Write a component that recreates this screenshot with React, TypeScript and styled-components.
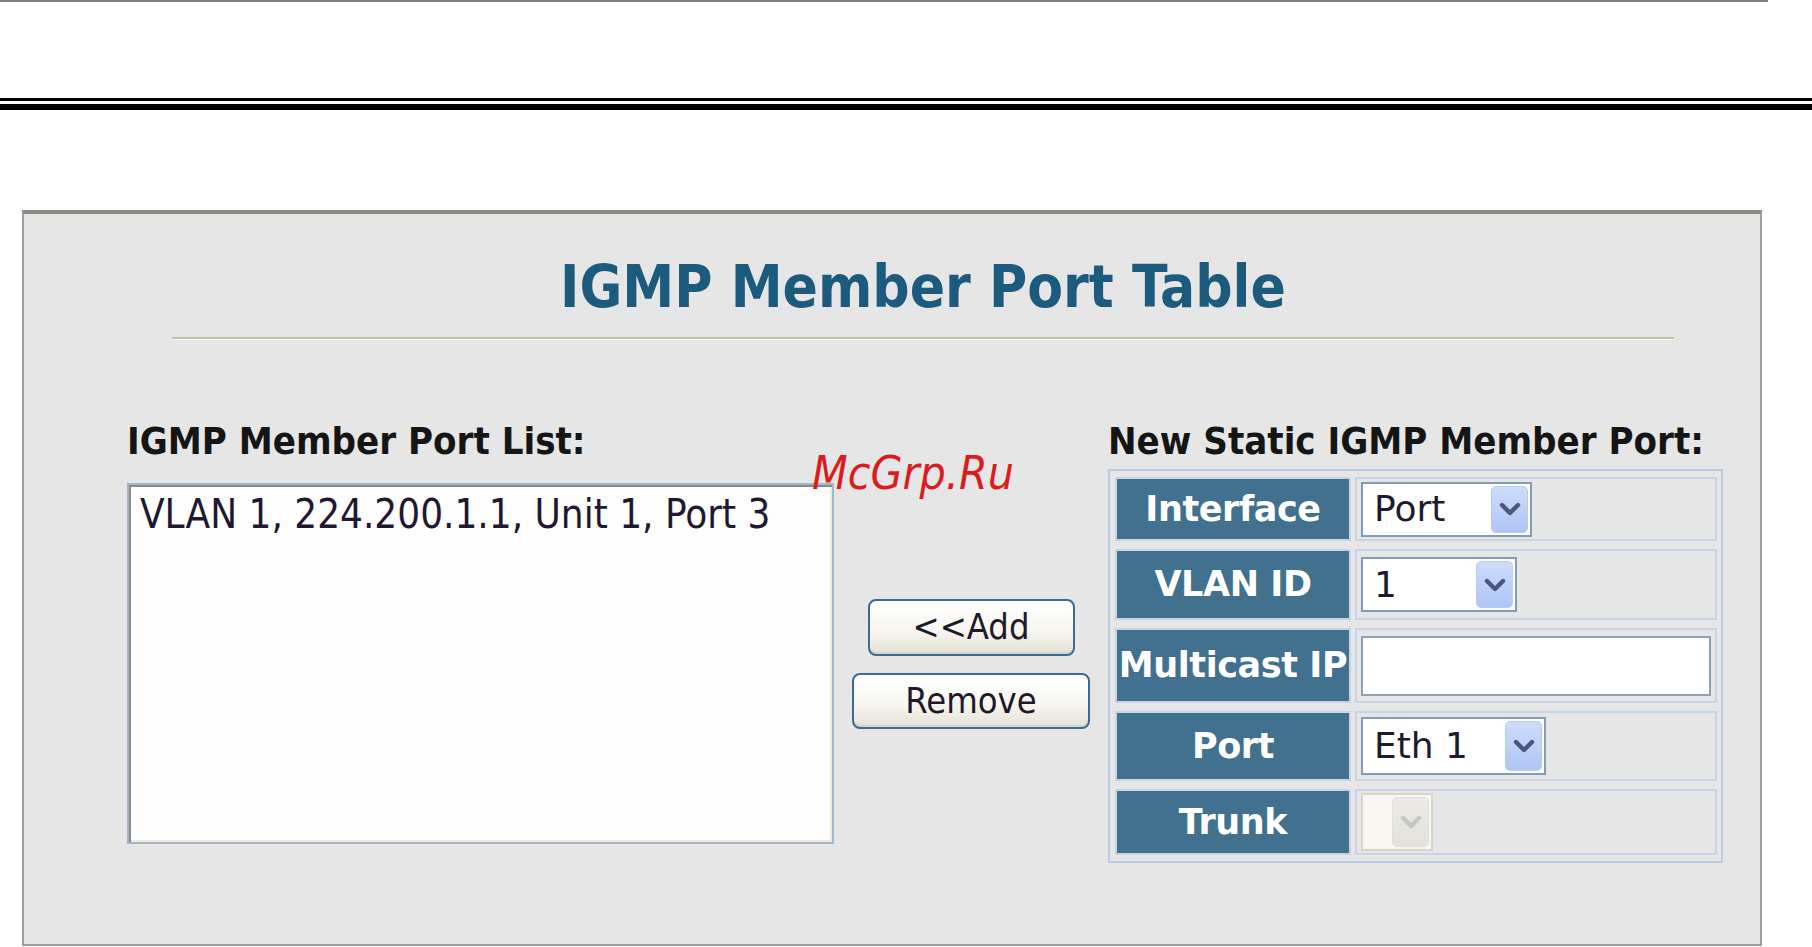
import React from "react";
import styled, { createGlobalStyle } from "styled-components";

const COND = `"DejaVu Sans Condensed", "DejaVu Sans", sans-serif`;
const WIDE = `"DejaVu Sans", "Liberation Sans", sans-serif`;

const GlobalStyle = createGlobalStyle`
  html, body { margin: 0; padding: 0; background: #ffffff; }
  body { font-family: ${WIDE}; }
  *, *::before, *::after { box-sizing: border-box; }
`;

const Page = styled.div`
  position: relative;
  width: 1812px;
  height: 947px;
  overflow: hidden;
  background: #ffffff;
`;

const TopRule = styled.div`
  height: 2px;
  margin-right: 44px;
  background: #808080;
`;

const DoubleRule = styled.div`
  margin-top: 96px;
  height: 12px;
  border-top: 3px solid #000000;
  border-bottom: 6px solid #000000;
`;

const Panel = styled.section`
  margin: 100px 0 0 22px;
  width: 1740px;
  height: 736px;
  background: #e6e6e6;
  border-top: 4px solid #8a8982;
  border-left: 2px solid #9c9c9c;
  border-right: 2px solid #9c9c9c;
  border-bottom: 2px solid #9c9c9c;
  padding-top: 44px;
`;

const TitleBlock = styled.header`
  margin-left: 148px;
  width: 1502px;
`;

const Title = styled.h1`
  margin: 0;
  font-family: ${COND};
  font-weight: bold;
  font-size: 58px;
  line-height: 58px;
  text-align: center;
  color: #1d5b7e;
  white-space: nowrap;
`;

const TitleRule = styled.div`
  margin-top: 21px;
  height: 3px;
  border-top: 2px solid #c3c1ab;
  border-bottom: 1px solid #f5f5ef;
`;

const Body = styled.div`
  margin-top: 82px;
  padding-left: 103px;
  display: flex;
  align-items: flex-start;
`;

const Column = styled.div<{ $w: number }>`
  width: ${(p) => p.$w}px;
  display: flex;
  flex-direction: column;
`;

const Heading = styled.h2`
  margin: 0;
  font-family: ${COND};
  font-weight: bold;
  font-size: 38px;
  line-height: 38px;
  color: #151515;
  white-space: nowrap;
`;

const ListBox = styled.div`
  margin-top: 23px;
  width: 707px;
  height: 361px;
  background: #fdfdfd;
  border: 2px solid #a3b6cd;
  box-shadow: inset 2px 2px 0 #8a8a8a, inset -2px -2px 0 #efeadc;
  padding: 9px 11px;
`;

const ListItem = styled.div`
  font-family: ${COND};
  font-size: 40px;
  line-height: 40px;
  color: #1f1830;
  white-space: nowrap;
`;

const ButtonColumn = styled.div`
  width: 274px;
  height: 361px;
  margin-top: 61px;
  display: flex;
  flex-direction: column;
  align-items: center;
  justify-content: center;
  gap: 17px;
`;

const Button = styled.button<{ $w: number; $h: number }>`
  width: ${(p) => p.$w}px;
  height: ${(p) => p.$h}px;
  margin: 0;
  padding: 0;
  border: 2px solid #3c6a96;
  border-radius: 8px;
  background: linear-gradient(#ffffff 0%, #f7f6f1 55%, #e4e1d6 100%);
  box-shadow: inset 0 -2px 0 #d6d2c4;
  font-family: ${COND};
  font-size: 36px;
  line-height: 36px;
  color: #1e1a28;
  cursor: pointer;
`;

const FormTable = styled.div`
  margin-top: 9px;
  width: 615px;
  border: 2px solid #b9cbe7;
  padding: 6px 4px 6px 5px;
  display: grid;
  grid-template-columns: 236px 362px;
  grid-template-rows: 64px 71px 75px 70px 66px;
  column-gap: 4px;
  row-gap: 8px;
`;

const LabelCell = styled.div`
  background: #41718f;
  border: 2px solid #c7d4e8;
  display: flex;
  align-items: center;
  justify-content: center;
  font-family: ${WIDE};
  font-weight: bold;
  font-size: 35px;
  line-height: 35px;
  color: #ffffff;
  white-space: nowrap;
  letter-spacing: -0.4px;
`;

const ValueCell = styled.div`
  border: 2px solid #c7d4e8;
  display: flex;
  align-items: center;
  padding-left: 4px;
`;

const Select = styled.div<{ $w: number; $h: number; $disabled?: boolean }>`
  width: ${(p) => p.$w}px;
  height: ${(p) => p.$h}px;
  border: 2px solid ${(p) => (p.$disabled ? "#d9d5c5" : "#7f9db9")};
  background: ${(p) => (p.$disabled ? "#f7f6f0" : "#ffffff")};
  display: flex;
  align-items: stretch;
  padding: 2px 2px 2px ${(p) => (p.$disabled ? 16 : 11)}px;
`;

const SelectValue = styled.span`
  flex: 1;
  display: flex;
  align-items: center;
  font-family: ${WIDE};
  font-size: 36px;
  line-height: 36px;
  color: #1e1a2c;
  white-space: nowrap;
`;

const ArrowButton = styled.span<{ $disabled?: boolean }>`
  width: 37px;
  display: flex;
  align-items: center;
  justify-content: center;
  border-radius: 5px;
  border: 1px solid ${(p) => (p.$disabled ? "#e0dfd8" : "#b7cbf2")};
  background: ${(p) =>
    p.$disabled
      ? "linear-gradient(#ebeae5, #e2e1db)"
      : "linear-gradient(#cddcfc, #afc5f5)"};
  color: ${(p) => (p.$disabled ? "#c6c6c2" : "#48587c")};
`;

const TextInput = styled.input`
  width: 350px;
  height: 60px;
  margin: 0;
  border: 2px solid #8ca2bb;
  background: #ffffff;
  font-family: ${WIDE};
  font-size: 34px;
  outline: none;
`;

const Watermark = styled.span`
  position: absolute;
  left: 812px;
  top: 450px;
  font-family: ${COND};
  font-style: italic;
  font-size: 46px;
  line-height: 46px;
  color: #dc1c1c;
  white-space: nowrap;
  pointer-events: none;
`;

const Chevron = () => (
  <svg width="22" height="14" viewBox="0 0 22 14" aria-hidden="true">
    <path
      d="M3 3 L11 11 L19 3"
      fill="none"
      stroke="currentColor"
      strokeWidth="4.4"
      strokeLinecap="round"
      strokeLinejoin="round"
    />
  </svg>
);

type SelectProps = { value: string; w: number; h: number; disabled?: boolean };

const Dropdown = ({ value, w, h, disabled }: SelectProps) => (
  <Select $w={w} $h={h} $disabled={disabled}>
    <SelectValue>{value}</SelectValue>
    <ArrowButton $disabled={disabled}>
      <Chevron />
    </ArrowButton>
  </Select>
);

export default function App() {
  return (
    <Page>
      <GlobalStyle />
      <TopRule />
      <DoubleRule />
      <Panel>
        <TitleBlock>
          <Title>IGMP Member Port Table</Title>
          <TitleRule />
        </TitleBlock>
        <Body>
          <Column $w={707}>
            <Heading>IGMP Member Port List:</Heading>
            <ListBox>
              <ListItem>VLAN 1, 224.200.1.1, Unit 1, Port 3</ListItem>
            </ListBox>
          </Column>
          <ButtonColumn>
            <Button $w={207} $h={57}>&lt;&lt;Add</Button>
            <Button $w={238} $h={56}>Remove</Button>
          </ButtonColumn>
          <Column $w={615}>
            <Heading>New Static IGMP Member Port:</Heading>
            <FormTable>
              <LabelCell>Interface</LabelCell>
              <ValueCell>
                <Dropdown value="Port" w={171} h={55} />
              </ValueCell>
              <LabelCell>VLAN ID</LabelCell>
              <ValueCell>
                <Dropdown value="1" w={156} h={55} />
              </ValueCell>
              <LabelCell>Multicast IP</LabelCell>
              <ValueCell>
                <TextInput type="text" defaultValue="" />
              </ValueCell>
              <LabelCell>Port</LabelCell>
              <ValueCell>
                <Dropdown value="Eth 1" w={185} h={58} />
              </ValueCell>
              <LabelCell>Trunk</LabelCell>
              <ValueCell>
                <Dropdown value="" w={72} h={58} disabled />
              </ValueCell>
            </FormTable>
          </Column>
        </Body>
      </Panel>
      <Watermark>McGrp.Ru</Watermark>
    </Page>
  );
}
